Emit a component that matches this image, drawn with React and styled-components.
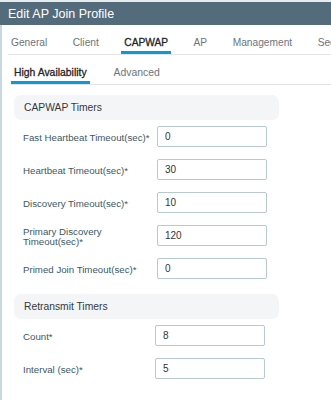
import React from "react";
import styled, { createGlobalStyle } from "styled-components";

const Global = createGlobalStyle`
  html, body { margin: 0; padding: 0; background: #fff; }
  body { font-family: "Liberation Sans", Arial, Helvetica, sans-serif; }
  * { box-sizing: border-box; }
`;

const Frame = styled.div`
  border-top: 2px solid #e7ebee;
  width: 331px;
  height: 400px;
  overflow: hidden;
  display: flex;
  flex-direction: column;
`;

const Header = styled.div`
  height: 23px;
  flex: none;
  background: #546b7c;
  color: #fff;
  font-size: 12.5px;
  display: flex;
  align-items: center;
  padding-left: 8px;
  white-space: nowrap;
`;

const Content = styled.div`
  flex: 1;
  border-left: 2px solid #c9d7e1;
  display: flex;
  flex-direction: column;
`;

const TabBar = styled.div`
  display: flex;
  gap: ${(p) => p.$gap}px;
  height: 30px;
  margin-left: ${(p) => p.$indent}px;
  border-bottom: 1px solid #e1e5e8;
  white-space: nowrap;
  overflow: hidden;
`;

const Tab = styled.div`
  height: 29px;
  padding: 9px 3px 0;
  font-size: ${(p) => p.$size}px;
  line-height: 17px;
  color: ${(p) => (p.$active ? "#1f2326" : "#6c747b")};
  -webkit-text-stroke: ${(p) => (p.$active ? "0.3px #1f2326" : "0")};
  border-bottom: 3px solid ${(p) => (p.$active ? "#0a9ad6" : "transparent")};
  flex: none;
`;

const Section = styled.div`
  display: flex;
  flex-direction: column;
  margin-top: ${(p) => p.$top}px;
`;

const SectionHeader = styled.div`
  margin-left: 12px;
  width: 265px;
  height: 25px;
  border-radius: 7px;
  background: #f4f5f6;
  color: #34393d;
  font-size: 10.3px;
  display: flex;
  align-items: center;
  padding-left: 10px;
`;

const Rows = styled.div`
  display: flex;
  flex-direction: column;
  gap: 12px;
  margin-top: 6px;
  padding-left: 21px;
`;

const Row = styled.div`
  display: flex;
  align-items: center;
  min-height: 21px;
`;

const Label = styled.label`
  width: ${(p) => p.$width}px;
  flex: none;
  padding-right: 3px;
  padding-top: 2px;
  font-size: 9.7px;
  line-height: 9.5px;
  color: #3d5866;
`;

const Input = styled.input`
  width: 110px;
  height: 21px;
  border: 1px solid #b7c9d5;
  border-radius: 2px;
  padding: 0 0 0 7px;
  font-family: inherit;
  font-size: 10px;
  color: #333;
  background: #fff;
  outline: none;
`;

const mainTabs = ["General", "Client", "CAPWAP", "AP", "Management", "Security"];

const capwap = [
  ["Fast Heartbeat Timeout(sec)*", "0"],
  ["Heartbeat Timeout(sec)*", "30"],
  ["Discovery Timeout(sec)*", "10"],
  ["Primary Discovery Timeout(sec)*", "120"],
  ["Primed Join Timeout(sec)*", "0"],
];

const retransmit = [
  ["Count*", "8"],
  ["Interval (sec)*", "5"],
];

export default function App() {
  return (
    <>
      <Global />
      <Frame>
        <Header>Edit AP Join Profile</Header>
        <Content>
          <TabBar $gap={19.5} $indent={6}>
            {mainTabs.map((t) => (
              <Tab key={t} $size={10.2} $active={t === "CAPWAP"}>
                {t}
              </Tab>
            ))}
          </TabBar>
          <TabBar $gap={21} $indent={9}>
            <Tab $size={10.4} $active>
              High Availability
            </Tab>
            <Tab $size={10.4}>Advanced</Tab>
          </TabBar>
          <Section $top={10}>
            <SectionHeader>CAPWAP Timers</SectionHeader>
            <Rows>
              {capwap.map(([l, v]) => (
                <Row key={l}>
                  <Label $width={134}>{l}</Label>
                  <Input defaultValue={v} />
                </Row>
              ))}
            </Rows>
          </Section>
          <Section $top={15}>
            <SectionHeader>Retransmit Timers</SectionHeader>
            <Rows>
              {retransmit.map(([l, v]) => (
                <Row key={l}>
                  <Label $width={132}>{l}</Label>
                  <Input defaultValue={v} />
                </Row>
              ))}
            </Rows>
          </Section>
        </Content>
      </Frame>
    </>
  );
}
